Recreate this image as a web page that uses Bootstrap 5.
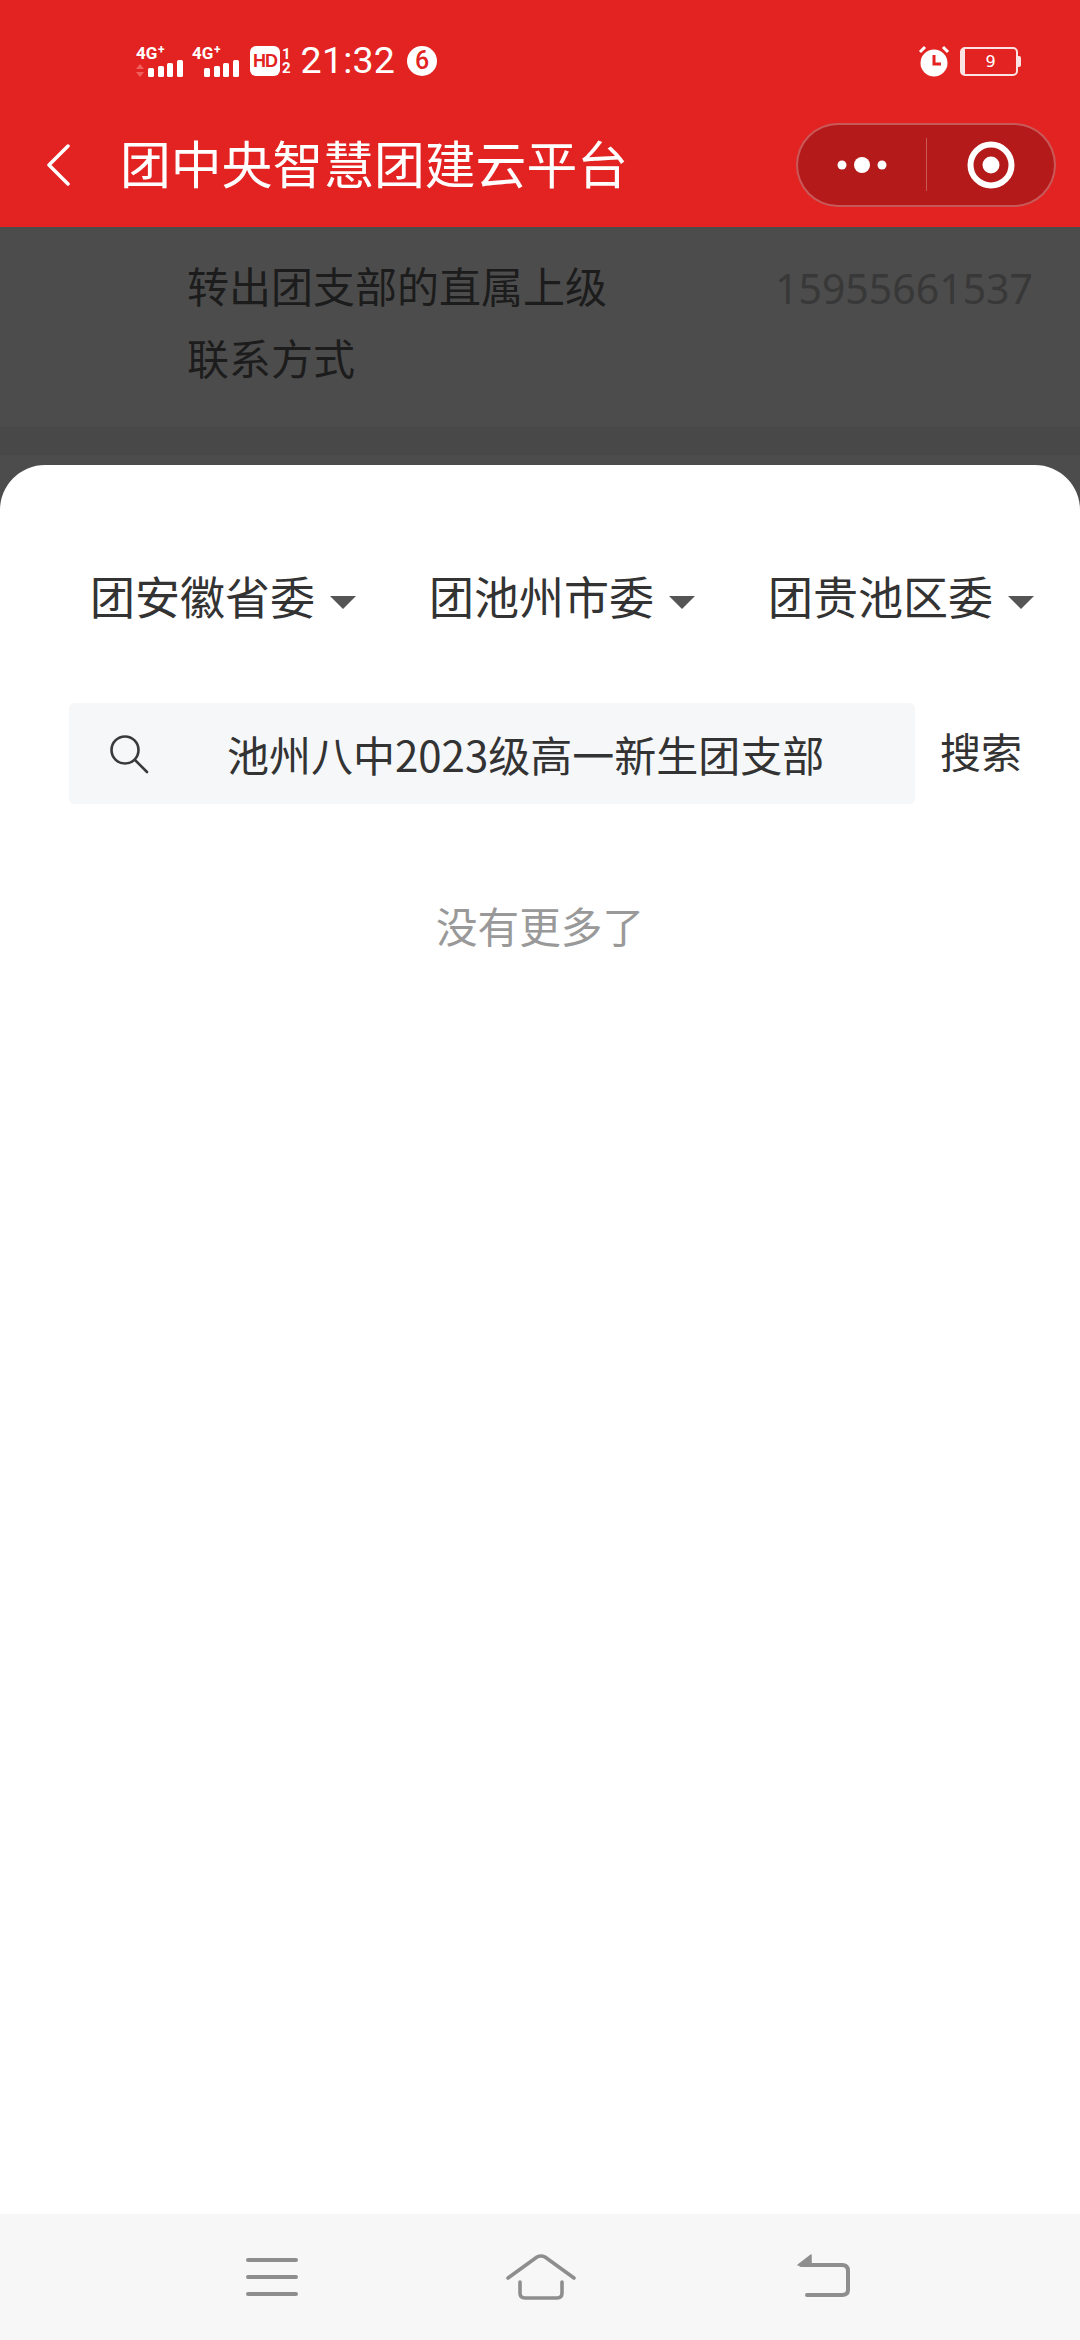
<!DOCTYPE html>
<html lang="zh-CN">
<head>
  <meta charset="UTF-8" />
  <meta name="viewport" content="width=device-width, initial-scale=1.0"/>
  <title>团中央智慧团建云平台</title>

  <link href="https://cdn.jsdelivr.net/npm/bootstrap@5.3.3/dist/css/bootstrap.min.css" rel="stylesheet">

  <style>
    html, body {
      margin: 0;
      width: 1080px;
      height: 2340px;
      overflow: hidden;
    }

    body {
      font-family: "Noto Sans CJK SC", "Noto Sans", sans-serif;
      background: #4c4c4c;
    }

    .app-page { height: 2340px; }

    /* red top */
    .top-red { background: #e32322; height: 227px; color: #fff; }
    .status-row { height: 122px; padding: 0 59px 0 136px; }
    .status-time { font: 400 37.5px/1 Roboto, sans-serif; margin-left: 10px; letter-spacing: .2px; }
    .hd-tag {
      width: 30px; height: 30px; background: #fff; color: #e32322; border-radius: 6px;
      font: 700 18px/30px "Liberation Sans", sans-serif; text-align: center; letter-spacing: -1px;
    }
    .hd-nums { font: 700 15px/14px Roboto, sans-serif; margin-left: 2px; }
    .msg-count {
      width: 30px; height: 30px; background: #fff; color: #e32322; margin-left: 12px;
      font: 500 25px/30px Roboto, sans-serif; text-align: center;
    }
    .batt-box {
      width: 58px; height: 29px; border: 2px solid #fbe3e3; border-radius: 5px; margin-left: 10px;
      font: 400 16px/25px "DejaVu Sans", sans-serif; text-align: center;
      border-left-width: 5px; border-left-color: #fbe3e3;
    }
    .batt-nub { width: 3px; height: 11px; background: #fbe3e3; border-radius: 0 2px 2px 0; }

    .title-row { height: 105px; padding: 0 24px 20px 46px; }
    .title-text { font-size: 50.8px; line-height: 1; margin-left: 50px; margin-top: -5px; font-weight: 400; }
    .capsule {
      width: 260px; height: 84px; background: #b51a1a; border: 2px solid rgba(255,255,255,.28);
      border-radius: 42px;
    }
    .capsule-left { width: 130px; }
    .capsule-right { width: 130px; border-left: 1px solid rgba(255,255,255,.28); height: 53px; }

    /* dimmed page behind the sheet */
    .dim-area { height: 238px; }
    .dim-row { height: 200px; padding: 22px 47px 0 187px; color: #1c1c1c; }
    .dim-label { font-size: 42px; line-height: 72px; }
    .dim-phone { font: 400 41px/72px "Noto Sans", sans-serif; color: #383838; margin-top: 3px; }
    .dim-band { height: 28px; background: #484848; }

    /* white sheet */
    .sheet { background: #fff; border-radius: 45px 45px 0 0; padding-top: 98px; }
    .pick-row { padding-left: 90px; gap: 73px; height: 66px; }
    .pick-btn {
      font-size: 45px; line-height: 66px; color: #333; padding: 0; border: 0; background: none;
      border-radius: 0;
    }
    .pick-btn::after { margin-left: 15px; vertical-align: .14em; color: #555; border-top-width: 13px; border-left-width: 13px; border-right-width: 13px; border-bottom: 0; }

    .search-row { margin: 74px 0 0 69px; }
    .search-box { width: 846px; height: 101px; background: #f6f7f9; border-radius: 6px; padding-left: 40px; }
    .search-val { margin-left: 78px; font-size: 42px; color: #333; line-height: 1; white-space: nowrap; }
    .search-go { font-size: 41px; line-height: 1; color: #333; margin-left: 25px; margin-top: -6px; }

    .no-more { margin-top: 95px; font-size: 41.6px; line-height: 52px; color: #999; text-align: center; }

    /* android bar */
    .bottom-bar { background: #f7f7f7; height: 126px; }
    .bar-slot { position: absolute; }
  </style>
</head>
<body>

<div class="app-page d-flex flex-column">

  <div class="top-red">
    <div class="status-row d-flex align-items-center">
      <svg width="48" height="34" viewBox="0 0 48 34" fill="#fff">
        <text x="0" y="15" font-family="Roboto" font-weight="700" font-size="17">4G</text>
        <text x="22" y="10" font-family="Roboto" font-weight="700" font-size="12">+</text>
        <path d="M4 20l4 5H0zM4 33l4-5H0z" fill="#f0605f"/>
        <rect x="12" y="24" width="6" height="9" rx="1.5"/>
        <rect x="22" y="22" width="6" height="11" rx="1.5"/>
        <rect x="31" y="19" width="6" height="14" rx="1.5"/>
        <rect x="41" y="16" width="6" height="17" rx="1.5"/>
      </svg>
      <svg class="ms-2" width="50" height="34" viewBox="0 0 50 34" fill="#fff">
        <text x="0" y="15" font-family="Roboto" font-weight="700" font-size="17">4G</text>
        <text x="22" y="10" font-family="Roboto" font-weight="700" font-size="12">+</text>
        <rect x="12" y="24" width="6" height="9" rx="1.5"/>
        <rect x="22" y="22" width="6" height="11" rx="1.5"/>
        <rect x="31" y="19" width="6" height="14" rx="1.5"/>
        <rect x="41" y="16" width="6" height="17" rx="1.5"/>
      </svg>
      <span class="hd-tag ms-2">HD</span>
      <span class="hd-nums d-flex flex-column"><span>1</span><span>2</span></span>
      <span class="status-time">21:32</span>
      <span class="msg-count rounded-circle">6</span>

      <span class="ms-auto d-flex align-items-center">
        <svg width="32" height="32" viewBox="0 0 32 32">
          <circle cx="16" cy="18" r="13.5" fill="#fff"/>
          <path d="M2 7l5-5M30 7l-5-5" stroke="#fff" stroke-width="3"/>
          <path d="M16 10v9h7" stroke="#e32322" stroke-width="3" fill="none"/>
        </svg>
        <span class="batt-box">9</span>
        <span class="batt-nub"></span>
      </span>
    </div>

    <div class="title-row d-flex align-items-center">
      <svg width="24" height="42" viewBox="0 0 24 42" fill="none" stroke="#fff" stroke-width="3.5" stroke-linecap="round" stroke-linejoin="round">
        <path d="M22 2L3 21l19 19"/>
      </svg>
      <span class="title-text">团中央智慧团建云平台</span>
      <div class="capsule ms-auto d-flex align-items-center">
        <div class="capsule-left d-flex justify-content-center align-items-center">
          <svg width="50" height="18" viewBox="0 0 50 18" fill="#fff">
            <circle cx="5" cy="9" r="4.5"/><circle cx="25" cy="9" r="8"/><circle cx="45" cy="9" r="4.5"/>
          </svg>
        </div>
        <div class="capsule-right d-flex justify-content-center align-items-center">
          <svg width="48" height="48" viewBox="0 0 48 48">
            <circle cx="24" cy="24" r="20.5" fill="none" stroke="#fff" stroke-width="6"/>
            <circle cx="24" cy="24" r="8.5" fill="#fff"/>
          </svg>
        </div>
      </div>
    </div>
  </div>

  <div class="dim-area">
    <div class="dim-row d-flex justify-content-between">
      <div class="dim-label">转出团支部的直属上级<br>联系方式</div>
      <div class="dim-phone">15955661537</div>
    </div>
    <div class="dim-band"></div>
  </div>

  <div class="sheet flex-grow-1">
    <div class="pick-row d-flex">
      <button class="pick-btn btn dropdown-toggle" type="button">团安徽省委</button>
      <button class="pick-btn btn dropdown-toggle" type="button">团池州市委</button>
      <button class="pick-btn btn dropdown-toggle" type="button">团贵池区委</button>
    </div>

    <div class="search-row d-flex align-items-center">
      <div class="search-box d-flex align-items-center">
        <svg width="40" height="40" viewBox="0 0 40 40" fill="none" stroke="#3a3a3a" stroke-width="2.6" stroke-linecap="round">
          <circle cx="16" cy="16" r="13.5"/>
          <path d="M26 26l12 12"/>
        </svg>
        <span class="search-val">池州八中2023级高一新生团支部</span>
      </div>
      <span class="search-go">搜索</span>
    </div>

    <div class="no-more">没有更多了</div>
  </div>

  <div class="bottom-bar d-flex align-items-center">
    <svg class="bar-slot" style="left:246px;top:2258px" width="52" height="38" viewBox="0 0 52 38" fill="none" stroke="#8e8e8e" stroke-width="4" stroke-linecap="round">
      <path d="M2 2h48M2 19h48M2 36h48"/>
    </svg>
    <svg class="bar-slot" style="left:506px;top:2254px" width="70" height="46" viewBox="0 0 70 46" fill="none" stroke="#8e8e8e" stroke-width="3.6" stroke-linecap="round" stroke-linejoin="round">
      <path d="M2 24L31 3q4-2 8 0l29 21"/>
      <path d="M14 28v11q0 5 5 5h32q5 0 5-5V28"/>
    </svg>
    <svg class="bar-slot" style="left:797px;top:2254px" width="54" height="44" viewBox="0 0 54 44" fill="none" stroke="#8e8e8e" stroke-width="4" stroke-linecap="round" stroke-linejoin="round">
      <path d="M4 11h41q6 0 6 6v19q0 5-6 5H10"/>
      <path d="M1 11L14 1v10z" fill="#8e8e8e" stroke-width="1.5"/>
    </svg>
  </div>

</div>

<script src="https://cdn.jsdelivr.net/npm/bootstrap@5.3.3/dist/js/bootstrap.bundle.min.js"></script>
</body>
</html>
